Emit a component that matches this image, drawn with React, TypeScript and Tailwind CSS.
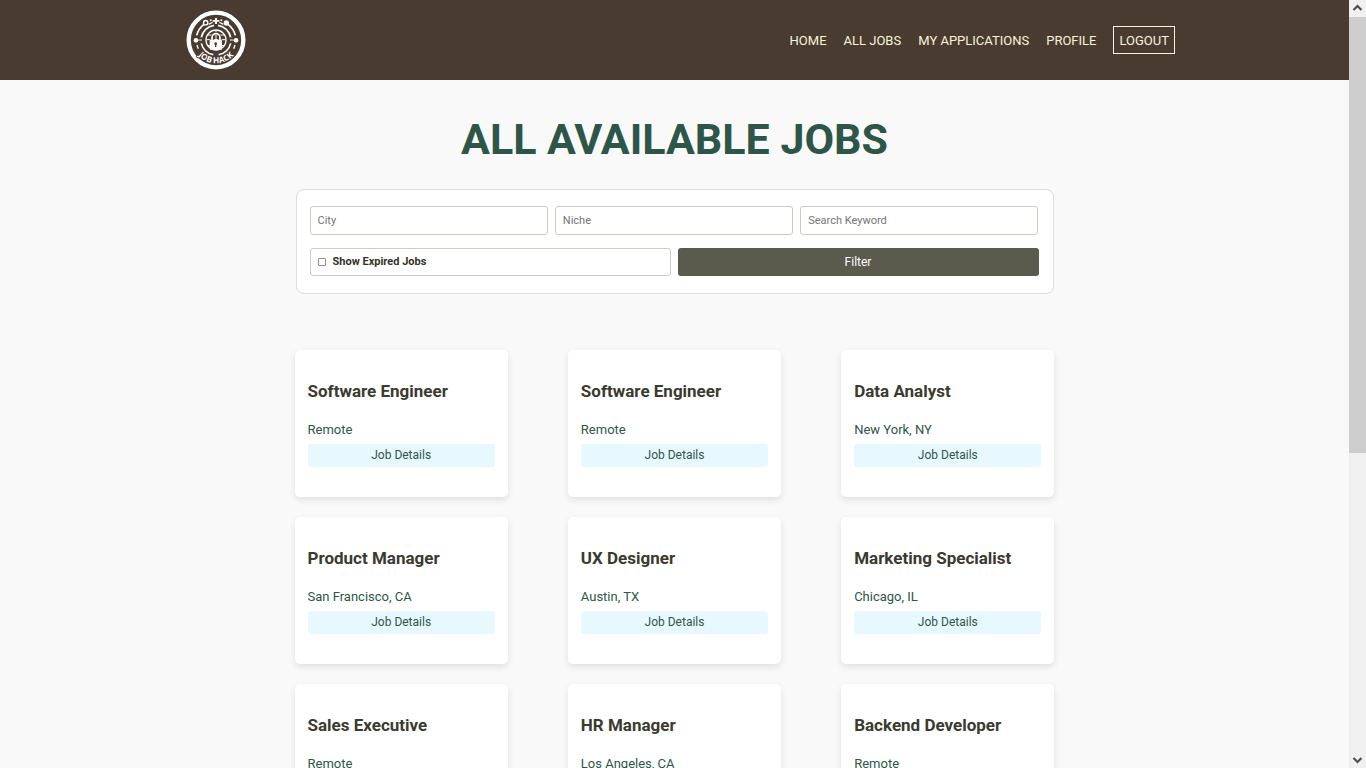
import React from "react";

const navLinks = ["HOME", "ALL JOBS", "MY APPLICATIONS", "PROFILE"];

const filters = [
  { id: "city", label: "City" },
  { id: "niche", label: "Niche" },
  { id: "keyword", label: "Search Keyword" },
];

const jobs = [
  { title: "Software Engineer", location: "Remote" },
  { title: "Software Engineer", location: "Remote" },
  { title: "Data Analyst", location: "New York, NY" },
  { title: "Product Manager", location: "San Francisco, CA" },
  { title: "UX Designer", location: "Austin, TX" },
  { title: "Marketing Specialist", location: "Chicago, IL" },
  { title: "Sales Executive", location: "Remote" },
  { title: "HR Manager", location: "Los Angeles, CA" },
  { title: "Backend Developer", location: "Remote" },
];

function Logo() {
  return (
    <svg viewBox="18 15 180 180" className="size-15" role="img" aria-label="Job Hack">
      <circle cx="108" cy="105" r="82" fill="none" stroke="#fff" strokeWidth="13" />
      <g fill="none" stroke="#fff" strokeWidth="5">
        <path d="M50 91 A60 60 0 0 1 72 58" />
        <path d="M144 58 A60 60 0 0 1 166 91" />
        <path d="M64 97 A45 45 0 0 1 102 61" />
        <path d="M114 61 A45 45 0 0 1 152 97" />
        <path d="M64 115 A45 45 0 0 0 100 149" />
        <path d="M152 115 A45 45 0 0 1 116 149" />
        <path d="M86 58 A54 54 0 0 1 98 52" strokeWidth="4" />
        <path d="M118 52 A54 54 0 0 1 130 58" strokeWidth="4" />
        <path d="M51 120 L55 131 M165 120 L161 131" strokeWidth="4" />
        <path d="M56 105 H66 M150 105 H160" strokeWidth="3" />
        <circle cx="77" cy="53" r="6.5" strokeWidth="4" />
      </g>
      <g fill="#fff">
        <path d="M105 39 h6 v6 h7 v5 h-7 v7 h-6 v-7 h-7 v-5 h7z" />
        <circle cx="92" cy="46" r="3" />
        <circle cx="124" cy="46" r="3" />
        <circle cx="139" cy="54" r="8" />
        <circle cx="48" cy="106" r="7" />
        <circle cx="168" cy="106" r="7" />
      </g>
      <circle cx="108" cy="105" r="30" fill="none" stroke="#fff" strokeWidth="4" />
      <path d="M80 104 H136 M84 90 H132 M84 122 H132 M108 77 V135" stroke="#fff" strokeWidth="3" />
      <path d="M96 105 V98 a12 12 0 0 1 24 0 V105" fill="none" stroke="#4a3b31" strokeWidth="10" />
      <path d="M96 105 V98 a12 12 0 0 1 24 0 V105" fill="none" stroke="#fff" strokeWidth="5" />
      <rect x="89" y="105" width="37" height="29" rx="3" fill="#fff" />
      <circle cx="107" cy="116" r="4" fill="#4a3b31" />
      <path d="M105 117 h4 v9 h-4z" fill="#4a3b31" />
      <path id="logo-arc" d="M36 103 A72 72 0 0 0 180 103" fill="none" />
      <text
        fill="#fff"
        fontSize="25"
        fontWeight="700"
        stroke="#4a3b31"
        strokeWidth="5"
        paintOrder="stroke"
        className="font-['Open_Sans',sans-serif]"
      >
        <textPath href="#logo-arc" startOffset="50%" textAnchor="middle">
          JOB HACK
        </textPath>
      </text>
    </svg>
  );
}

function Header() {
  return (
    <header className="bg-[#4a3b31]">
      <div className="mx-auto flex h-20 max-w-[1001px] items-center justify-between">
        <a href="#home" className="ml-3">
          <Logo />
        </a>
        <nav className="flex items-center gap-[17px] text-[13px] leading-5 text-[#f5f5dc]">
          {navLinks.map((label) => (
            <a key={label} href="#nav" className="pt-0.5">
              {label}
            </a>
          ))}
          <button type="button" className="h-7 border border-[#f5f5dc] px-[5px] pt-0.5">
            LOGOUT
          </button>
        </nav>
      </div>
    </header>
  );
}

function FilterPanel() {
  return (
    <form className="mx-px flex flex-col gap-[13px] rounded-lg border border-[#dddddd] bg-white pt-4 pr-[14px] pb-[17px] pl-[13px]">
      <div className="grid grid-cols-3 gap-[7px]">
        {filters.map(({ id, label }) => (
          <input
            key={id}
            id={id}
            type="text"
            aria-label={label}
            placeholder={label}
            className="h-[29px] min-w-0 rounded-[3px] border border-[#ccccbf] bg-white px-[7px] text-[11px] text-[#333333] placeholder:text-[#757575]"
          />
        ))}
      </div>
      <div className="grid grid-cols-2 gap-[7px]">
        <label className="flex h-7 items-center gap-[7px] rounded-[3px] border border-[#ccccbf] px-[7px] text-[11px] font-bold text-[#333328]">
          <input
            type="checkbox"
            className="size-2 appearance-none rounded-[1px] border border-[#8f8f9d] bg-white checked:bg-[#5a5a4d]"
          />
          Show Expired Jobs
        </label>
        <button type="button" className="h-7 rounded-[3px] bg-[#5a5a4d] text-xs text-white">
          Filter
        </button>
      </div>
    </form>
  );
}

function JobCard({ title, location }: { title: string; location: string }) {
  return (
    <article className="rounded-[5px] bg-white px-[13px] pt-[31px] pb-[30px] shadow-[0_3px_7px_rgba(0,0,0,0.1)]">
      <h2 className="text-[17px] leading-5 font-bold text-[#3b3a2e]">{title}</h2>
      <p className="mt-[19px] text-[13px] leading-5 text-[#2d5649]">{location}</p>
      <a
        href="#details"
        className="mt-1 block rounded-[3px] bg-[#e8f8ff] text-center text-xs leading-[23px] text-[#2d5649]"
      >
        Job Details
      </a>
    </article>
  );
}

function Scrollbar() {
  return (
    <div className="flex w-[17px] shrink-0 flex-col bg-[#f0f0f0]" aria-hidden="true">
      <svg viewBox="0 0 17 17" className="h-[17px] w-[17px]">
        <path d="M4.5 10 L8.5 6 L12.5 10" fill="none" stroke="#505050" strokeWidth="2.2" />
      </svg>
      <div className="h-[56.8%] bg-[#cdcdcd]" />
      <div className="grow" />
      <svg viewBox="0 0 17 17" className="h-[17px] w-[17px]">
        <path d="M4.5 7 L8.5 11 L12.5 7" fill="none" stroke="#505050" strokeWidth="2.2" />
      </svg>
    </div>
  );
}

export default function App() {
  return (
    <div className="flex h-screen overflow-hidden bg-[#f9f9f9] font-['Roboto',sans-serif]">
      <div className="min-w-0 flex-1 overflow-hidden">
        <Header />
        <main className="mx-auto max-w-[760px] pt-8">
          <h1 className="mb-[23px] text-center text-[43px] leading-[54px] font-bold text-[#2d5649]">
            ALL AVAILABLE JOBS
          </h1>
          <FilterPanel />
          <section className="mt-14 grid grid-cols-3 gap-x-15 gap-y-5">
            {jobs.map((job, index) => (
              <JobCard key={index} {...job} />
            ))}
          </section>
        </main>
      </div>
      <Scrollbar />
    </div>
  );
}
